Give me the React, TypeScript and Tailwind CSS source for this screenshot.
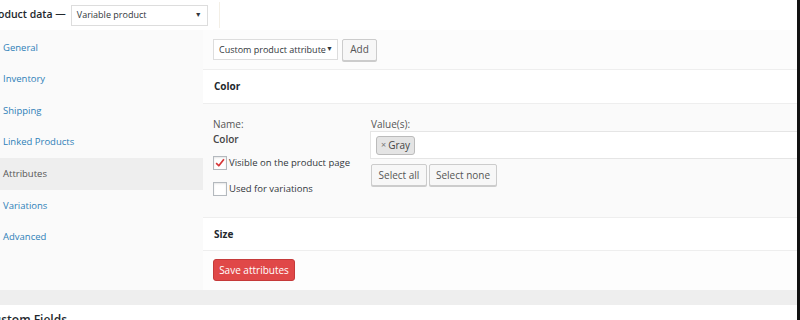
import React from 'react';

const tabs = ['General', 'Inventory', 'Shipping', 'Linked Products', 'Attributes', 'Variations', 'Advanced'];

const Checkbox: React.FC<{ checked?: boolean }> = ({ checked }) => (
  <span className="w-[14px] h-[14px] border border-[#b4b9be] bg-white shadow-[inset_0_1px_2px_rgba(0,0,0,0.1)] flex items-center justify-center shrink-0">
    {checked && (
      <svg viewBox="0 0 14 14" className="w-[12px] h-[12px]">
        <path d="M2.5 7.2 L5.6 10.2 L11.6 2.6" fill="none" stroke="#d63638" strokeWidth="2" strokeLinejoin="round" />
      </svg>
    )}
  </span>
);

const App: React.FC = () => {
  return (
    <div className="w-[800px] h-[320px] overflow-hidden bg-white flex text-[#32373c]" style={{ fontFamily: '"Open Sans", "Noto Sans", sans-serif' }}>
      <div className="w-[797px] flex flex-col">
        {/* Header */}
        <div className="h-[30px] flex items-center shrink-0">
          <span className="ml-[-13px] text-[10.5px] font-semibold text-[#23282d] whitespace-nowrap">Product data —</span>
          <div className="ml-[5px] w-[137px] h-[21px] border border-[#ddd] bg-white flex items-center justify-between px-[5px] text-[9px] text-[#32373c]">
            <span>Variable product</span>
            <span className="text-[7px]">▼</span>
          </div>
          <div className="ml-[11px] w-px h-[26px] bg-[#f3efe6]" />
        </div>

        {/* Body */}
        <div className="h-[260px] flex shrink-0">
          <div className="w-[203px] bg-[#fafafa] pt-[2px]">
            {tabs.map((t) => (
              <div
                key={t}
                className={`h-[31.6px] flex items-center pl-[3px] text-[9.5px] ${
                  t === 'Attributes' ? 'bg-[#eeeeee] text-[#555]' : 'text-[#2e7fb8]'
                }`}
              >
                {t}
              </div>
            ))}
          </div>

          <div className="flex-1 flex flex-col">
            {/* Toolbar */}
            <div className="h-[40px] bg-[#fcfcfc] border-b border-[#eee] flex items-center pl-[10px] gap-[4px]">
              <div className="w-[125px] h-[21px] border border-[#ddd] bg-white flex items-center justify-between px-[5px] text-[9px]">
                <span className="whitespace-nowrap">Custom product attribute</span>
                <span className="text-[7px]">▼</span>
              </div>
              <div className="w-[35px] h-[22px] border border-[#ccc] bg-[#f7f7f7] rounded-[2px] shadow-[0_1px_0_#ccc] flex items-center justify-center text-[10px] text-[#555]">
                Add
              </div>
            </div>

            {/* Color header */}
            <div className="h-[34px] bg-white border-b border-[#eee] flex items-center pl-[11px] text-[10px] font-bold text-[#23282d]">
              Color
            </div>

            {/* Color content */}
            <div className="h-[113px] bg-[#fafafa] flex pl-[10px] pt-[13px]">
              <div className="w-[157px] flex flex-col text-[10px]">
                <span className="h-[14px] leading-[14px] text-[#555]">Name:</span>
                <span className="h-[15px] leading-[15px] mt-[1px] font-semibold text-[#444]">Color</span>
                <div className="mt-[9px] flex items-center gap-[2px] text-[9.5px]">
                  <Checkbox checked />
                  <span>Visible on the product page</span>
                </div>
                <div className="mt-[12px] flex items-center gap-[2px] text-[9.5px]">
                  <Checkbox />
                  <span>Used for variations</span>
                </div>
              </div>
              <div className="flex-1 flex flex-col text-[10px]">
                <span className="h-[14px] leading-[14px] text-[#555] pl-[1px]">Value(s):</span>
                <div className="h-[28px] bg-white border-y border-l border-[#e5e5e5] flex items-center pl-[5px]">
                  <span className="h-[19px] px-[4px] bg-[#e4e4e4] border border-[#bbb] rounded-[3px] flex items-center text-[#444]">
                    <span className="text-[9px] text-[#777] mr-[2px]">×</span>Gray
                  </span>
                </div>
                <div className="mt-[5px] flex gap-[2px] pl-[1px]">
                  <div className="w-[56px] h-[22px] border border-[#ccc] bg-[#f7f7f7] rounded-[2px] shadow-[0_1px_0_#ccc] flex items-center justify-center text-[#555]">
                    Select all
                  </div>
                  <div className="w-[68px] h-[22px] border border-[#ccc] bg-[#f7f7f7] rounded-[2px] shadow-[0_1px_0_#ccc] flex items-center justify-center text-[#555]">
                    Select none
                  </div>
                </div>
              </div>
            </div>

            {/* Size header */}
            <div className="h-[34px] bg-white border-y border-[#eee] flex items-center pl-[11px] text-[10px] font-bold text-[#23282d]">
              Size
            </div>

            {/* Save */}
            <div className="flex-1 bg-[#fdfdfd] flex items-start pl-[10px] pt-[8px]">
              <div className="w-[82px] h-[22px] bg-[#e04848] border border-[#c53a3a] rounded-[3px] flex items-center justify-center text-[10px] text-white">
                Save attributes
              </div>
            </div>
          </div>
        </div>

        {/* Bottom band */}
        <div className="h-[15px] bg-[#eeeeee] shrink-0" />
        <div className="h-[15px] bg-white shrink-0 overflow-hidden">
          <span className="block ml-[-14px] mt-[6px] text-[12px] font-semibold text-[#23282d] whitespace-nowrap">Custom Fields</span>
        </div>
      </div>
      <div className="w-[3px] bg-[#111]" />
    </div>
  );
};

export default App;
